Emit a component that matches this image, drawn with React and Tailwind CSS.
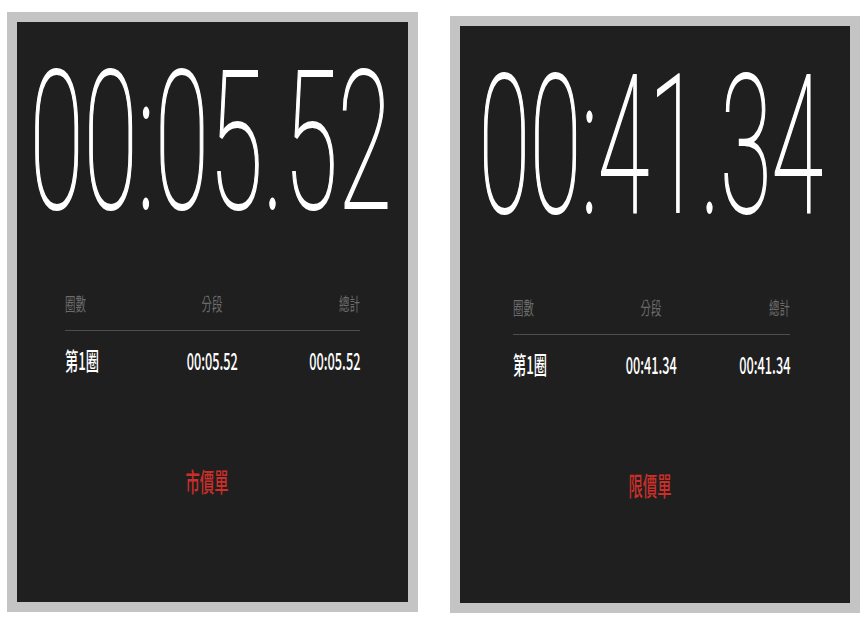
import React from 'react';

const cjk = { fontFamily: '"Noto Sans CJK TC", "Noto Sans CJK SC", sans-serif' };

const panels = [
  { time: '00:05.52', lap: '00:05.52', total: '00:05.52', action: '市價單', box: 'ml-[7px] mt-[12px] w-[411px] h-[600px]', table: 'px-[48px]', timePad: 'pr-[4px]', timeScale: 'scale-x-[0.51]' },
  { time: '00:41.34', lap: '00:41.34', total: '00:41.34', action: '限價單', box: 'ml-[32px] mt-[16px] w-[410px] h-[597px]', table: 'pl-[53px] pr-[60px]', timePad: 'pr-[8px]', timeScale: 'scale-x-[0.485]' },
];

const Panel = ({ p }) => (
  <div className={`${p.box} border-[10px] border-[#c4c4c4] bg-[#1f1f1f] flex flex-col`}>
    {/* big timer */}
    <div className={`pt-[24px] h-[217px] flex justify-center ${p.timePad}`}>
      <span
        className={`inline-block text-white text-[193px] leading-none font-thin whitespace-nowrap [-webkit-text-stroke:2px_white] ${p.timeScale}`}
        style={{ fontFamily: 'Roboto, "Liberation Sans", sans-serif' }}
      >
        {p.time}
      </span>
    </div>

    {/* laps table */}
    <div className={`${p.table} mt-[55px]`}>
      <div className="grid grid-cols-3 text-[18px] leading-none text-[#6b6b6b]" style={cjk}>
        <span className="justify-self-start origin-left scale-x-[0.58] whitespace-nowrap">圈數</span>
        <span className="justify-self-center scale-x-[0.58] whitespace-nowrap">分段</span>
        <span className="justify-self-end origin-right scale-x-[0.58] whitespace-nowrap">總計</span>
      </div>
      <div className="mt-[18px] border-t border-[#4d4d4d]"></div>
      <div className="mt-[17px] grid grid-cols-3 text-[24px] leading-none text-white font-medium" style={cjk}>
        <span className="justify-self-start origin-left scale-x-[0.55] whitespace-nowrap">第1圈</span>
        <span className="justify-self-center scale-x-[0.53] whitespace-nowrap">{p.lap}</span>
        <span className="justify-self-end origin-right scale-x-[0.53] whitespace-nowrap">{p.total}</span>
      </div>
    </div>

    {/* action */}
    <div className="mt-[96px] flex justify-center pr-[10px]">
      <span className="text-[26px] leading-none text-[#cc2f2a] font-medium scale-x-[0.55] whitespace-nowrap" style={cjk}>
        {p.action}
      </span>
    </div>
  </div>
);

export default function App() {
  return (
    <div className="w-[868px] h-[621px] bg-white flex items-start overflow-hidden">
      {panels.map((p) => (
        <Panel key={p.action} p={p} />
      ))}
    </div>
  );
}
